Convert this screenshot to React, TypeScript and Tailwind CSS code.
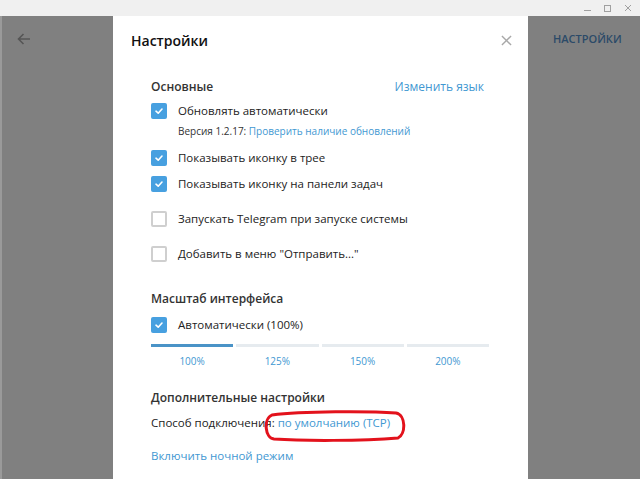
import React from 'react';

const font = { fontFamily: '"Open Sans", "Noto Sans", sans-serif' };

const Check = ({ on }: { on: boolean }) =>
  on ? (
    <span className="w-4 h-4 rounded-[2px] bg-[#47a0e0] flex items-center justify-center shrink-0">
      <svg width="10" height="10" viewBox="0 0 10 10">
        <path d="M2 5.2 L4.2 7.2 L8 3" fill="none" stroke="#fff" strokeWidth="1.6" strokeLinecap="round" strokeLinejoin="round" />
      </svg>
    </span>
  ) : (
    <span className="w-4 h-4 rounded-[2px] border-2 border-[#cfcfcf] bg-white shrink-0" />
  );

const Row = ({ on, label, className = '' }: { on: boolean; label: string; className?: string }) => (
  <div className={`h-[26px] flex items-center gap-[11px] ${className}`}>
    <Check on={on} />
    <span className="text-[11.5px] text-[#222]">{label}</span>
  </div>
);

const scales = ['100%', '125%', '150%', '200%'];

export default function App() {
  return (
    <div className="w-[640px] h-[479px] flex flex-col overflow-hidden bg-[#808080]" style={font}>
      <div className="h-4 bg-[#f0f0f0] flex items-center justify-end gap-[13px] pr-[8px]">
        <span className="w-[7px] h-px bg-[#a0a0a0] mt-[5px]" />
        <span className="w-[7px] h-[7px] border border-[#a0a0a0]" />
        <svg width="8" height="8" viewBox="0 0 8 8">
          <path d="M1 1 L7 7 M7 1 L1 7" stroke="#a0a0a0" strokeWidth="1" />
        </svg>
      </div>
      <div className="flex flex-1">
        <div className="w-[113px] border-l-2 border-[#9a9a9a] pt-[15px] pl-[14px]">
          <svg width="16" height="16" viewBox="0 0 16 16">
            <path d="M14 8 H2.5 M7.5 3 L2.5 8 L7.5 13" fill="none" stroke="#555" strokeWidth="1.6" />
          </svg>
        </div>
        <div className="w-[415px] bg-white flex flex-col">
          <div className="h-12 flex items-center justify-between pl-[18px] pr-4">
            <span className="text-[14px] font-semibold text-[#111]">Настройки</span>
            <svg width="11" height="11" viewBox="0 0 12 12">
              <path d="M1 1 L11 11 M11 1 L1 11" stroke="#a8a8a8" strokeWidth="1.5" />
            </svg>
          </div>
          <div className="pl-[38px] pr-[38px] flex flex-col">
            <div className="mt-3 h-[22px] flex items-center justify-between">
              <span className="text-[12px] font-semibold text-[#333]">Основные</span>
              <span className="text-[12px] text-[#3f98d2] mr-[6px]">Изменить язык</span>
            </div>
            <Row on label="Обновлять автоматически" />
            <div className="h-[14px] flex items-center pl-[27px] text-[10px]">
              <span className="text-[#333] font-medium">Версия 1.2.17:&nbsp;</span>
              <span className="text-[#3f98d2]">Проверить наличие обновлений</span>
            </div>
            <Row on label="Показывать иконку в трее" className="mt-[7px]" />
            <Row on label="Показывать иконку на панели задач" />
            <Row on={false} label="Запускать Telegram при запуске системы" className="mt-[9px]" />
            <Row on={false} label='Добавить в меню "Отправить..."' className="mt-[9px]" />
            <div className="mt-[21px] h-[22px] flex items-center">
              <span className="text-[12px] font-semibold text-[#333]">Масштаб интерфейса</span>
            </div>
            <Row on label="Автоматически (100%)" className="mt-[2px]" />
            <div className="w-[338px] grid grid-cols-4 gap-[3px] mt-[6px]">
              {scales.map((s, i) => (
                <div key={s} className="flex flex-col items-center">
                  <div className={`w-full h-[3px] ${i === 0 ? 'bg-[#4a93c7]' : 'bg-[#e6ebef]'}`} />
                  <span className="mt-[7px] h-[14px] flex items-center text-[10px] text-[#3f98d2]">{s}</span>
                </div>
              ))}
            </div>
            <div className="mt-[19px] h-[22px] flex items-center">
              <span className="text-[12px] font-semibold text-[#333]">Дополнительные настройки</span>
            </div>
            <div className="mt-[3px] h-[22px] flex items-center text-[11.5px]">
              <span className="text-[#222]">Способ подключения:&nbsp;</span>
              <span className="relative text-[#3f98d2]">
                по умолчанию (TCP)
                <svg className="absolute left-[-16px] top-[-4px]" width="146" height="32" viewBox="0 0 146 32">
                  <path
                    d="M10 5 C40 1 108 1 134 3 C144 5 144 24 136 28 C100 31 40 31 12 29 C3 28 1 9 10 5 Z"
                    fill="none"
                    stroke="#e3121c"
                    strokeWidth="3"
                  />
                </svg>
              </span>
            </div>
            <div className="mt-[11px] h-[22px] flex items-center">
              <span className="text-[11.5px] text-[#3f98d2]">Включить ночной режим</span>
            </div>
          </div>
        </div>
        <div className="flex-1 pt-[16px] pl-[25px]">
          <span className="block text-[11px] font-semibold text-[#2b4a68] leading-4 -mt-[1px]">НАСТРОЙКИ</span>
        </div>
      </div>
    </div>
  );
}
